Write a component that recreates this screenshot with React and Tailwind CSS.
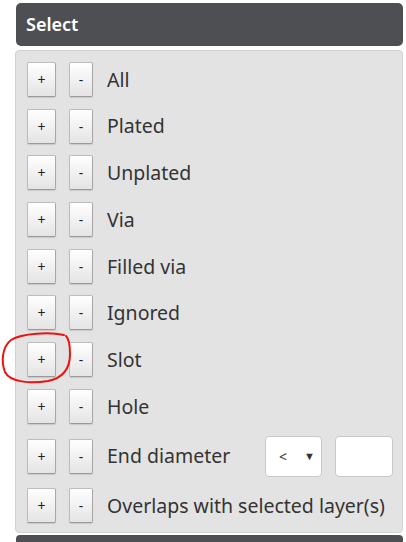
import React from "react";

const rows = ["All", "Plated", "Unplated", "Via", "Filled via", "Ignored", "Slot", "Hole"];

function Btn({ children, w }) {
  return (
    <div
      className={`${w} h-[35px] flex items-center justify-center rounded-[2px] border border-[#bdbdbd] border-b-[#9a9a9a] border-r-[#a8a8a8] bg-gradient-to-b from-[#ffffff] to-[#e4e4e4] text-[14px] text-[#222] shadow-[0_1px_1px_rgba(0,0,0,0.12)]`}
    >
      {children}
    </div>
  );
}

function Row({ label, extra, tall }) {
  return (
    <div className={`flex items-center ${tall ? "h-[41px]" : "h-[35px]"}`}>
      <Btn w="w-[29px]">+</Btn>
      <div className="w-[13px]" />
      <Btn w="w-[24px]">-</Btn>
      <div className="ml-[14px] text-[19.5px] text-[#333] leading-none whitespace-nowrap">{label}</div>
      {extra}
    </div>
  );
}

export default function App() {
  return (
    <div className="w-[406px] h-[542px] bg-white overflow-hidden relative" style={{ fontFamily: '"Noto Sans", "Open Sans", sans-serif' }}>
      <div className="pt-[3px] pl-[16px] pr-[3px]">
        <div className="h-[43px] rounded-[5px] bg-[#4e4f53] flex items-center pl-[10px] text-white text-[18px] font-semibold">
          Select
        </div>
        <div className="mt-[4px] ml-[-1px] rounded-[4px] border border-[#d2d2d2] bg-[#e3e3e3] pt-[11px] pb-[9px] pl-[11px] pr-[9px] flex flex-col gap-[11.7px]">
          {rows.map((r) => (
            <Row key={r} label={r} />
          ))}
          <Row
            label="End diameter"
            tall
            extra={
              <div className="ml-auto flex items-center gap-[13px]">
                <div className="w-[57px] h-[41px] bg-white border border-[#c8c8c8] rounded-[4px] flex items-center pl-[13px] text-[14px] text-[#333]">
                  <span>&lt;</span>
                  <span className="ml-[17px] text-[11px]">▼</span>
                </div>
                <div className="w-[58px] h-[41px] bg-white border border-[#c8c8c8] rounded-[4px]" />
              </div>
            }
          />
          <Row label="Overlaps with selected layer(s)" />
        </div>
        <div className="mt-[2px] h-[10px] rounded-t-[4px] bg-[#4e4f53]" />
      </div>
      <svg className="absolute left-0 top-[330px]" width="76" height="58" viewBox="0 0 76 58">
        <path
          d="M64 5 C 50 2, 22 3, 11 10 C 2 17, 1 32, 5 42 C 10 52, 30 54, 48 51 C 63 48, 70 38, 70 24 C 70 14, 69 9, 66 6"
          fill="none"
          stroke="#ee1111"
          strokeWidth="2"
          strokeLinecap="round"
        />
      </svg>
    </div>
  );
}
